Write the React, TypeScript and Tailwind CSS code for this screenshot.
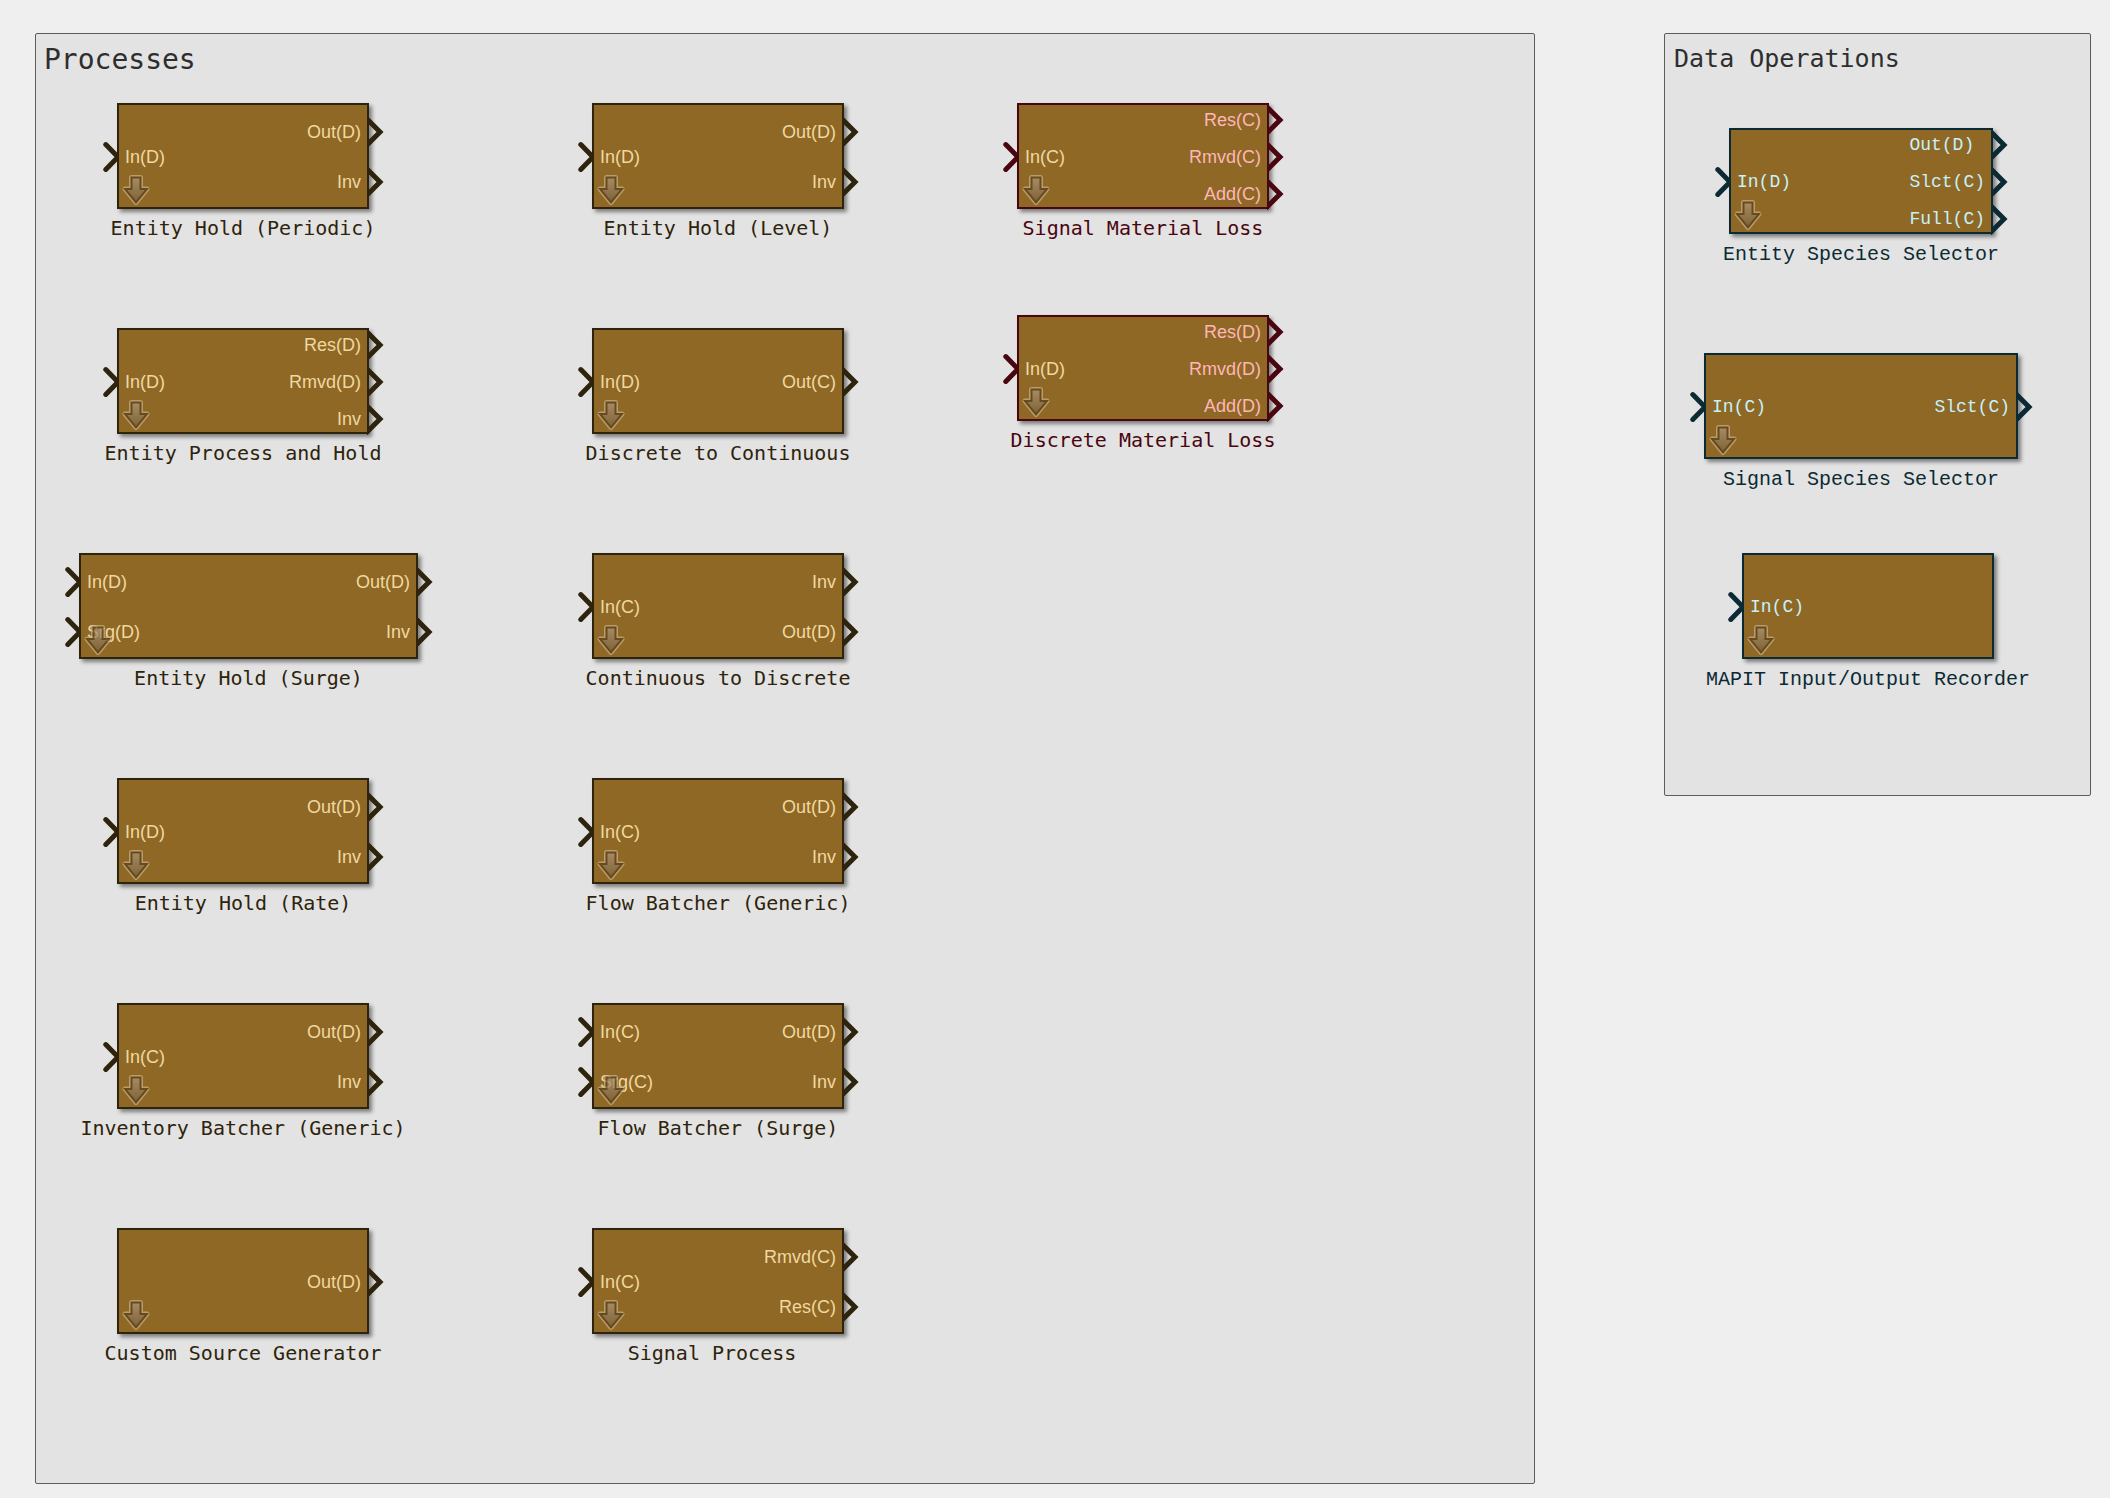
import React from "react";

type Tone = "olive" | "maroon" | "teal";

interface BlockSpec {
  name: string;
  ins: string[];
  outs: string[];
  place?: string;
  width?: string;
}

const TONES: Record<Tone, { border: string; label: string; stroke: string; inText: string; outText: string; port: string; caption: string }> = {
  olive: {
    border: "border-[#2e230c]",
    label: "text-[#2e230c]",
    stroke: "#2e230c",
    inText: "text-[#f0d8a2]",
    outText: "text-[#f0d8a2]",
    port: "font-['Liberation_Sans',Arial,sans-serif] text-[18px]",
    caption: "mt-[7px] font-['DejaVu_Sans_Mono',monospace] text-[20px]",
  },
  maroon: {
    border: "border-[#4a0610]",
    label: "text-[#4a0610]",
    stroke: "#4a0610",
    inText: "text-[#f0d8a2]",
    outText: "text-[#ffb6b9]",
    port: "font-['Liberation_Sans',Arial,sans-serif] text-[18px]",
    caption: "mt-[7px] font-['DejaVu_Sans_Mono',monospace] text-[20px]",
  },
  teal: {
    border: "border-[#0b2a33]",
    label: "text-[#0b2a33]",
    stroke: "#0b2a33",
    inText: "text-[#c6f1fa]",
    outText: "text-[#c6f1fa]",
    port: "font-['Liberation_Mono',monospace] text-[18px]",
    caption: "mt-[9px] font-['Liberation_Mono',monospace] text-[20px]",
  },
};

function InChevron({ color }: { color: string }) {
  return (
    <svg className="absolute top-1/2 right-full h-[32px] w-[17px] -translate-y-1/2" viewBox="0 0 17 32" fill="none" aria-hidden="true">
      <path d="M3.8 3.6 L16 16 L3.8 28.4" stroke={color} strokeWidth="5" strokeLinecap="round" />
    </svg>
  );
}

function OutChevron({ color }: { color: string }) {
  return (
    <svg className="absolute top-1/2 left-full h-[32px] w-[17px] -translate-y-1/2" viewBox="0 0 17 32" fill="none" aria-hidden="true">
      <path d="M-3 0 L13 16 L-3 32" stroke={color} strokeWidth="5" />
    </svg>
  );
}

function LookUnder() {
  const outline = "M9.5 2.5 H18.5 V14 H25 L14 27.5 L3 14 H9.5 Z";
  return (
    <svg className="absolute bottom-0 left-[3px] h-[32px] w-[28px] overflow-visible opacity-75" viewBox="0 0 28 32" fill="none" aria-hidden="true">
      <defs>
        <linearGradient id="arrowFill" x1="0" y1="0" x2="0" y2="1">
          <stop offset="0" stopColor="#b0977a" />
          <stop offset="1" stopColor="#78603c" />
        </linearGradient>
      </defs>
      <path d={outline} stroke="#c9ae84" strokeWidth="5" strokeLinejoin="round" />
      <path d={outline} fill="url(#arrowFill)" stroke="#5a421c" strokeWidth="2" />
    </svg>
  );
}

function Block({ spec, tone }: { spec: BlockSpec; tone: Tone }) {
  const t = TONES[tone];
  const outGap = spec.outs.length === 3 ? "gap-[13px]" : "gap-[26px]";
  return (
    <figure className={`flex flex-col ${spec.width ?? "w-[252px]"} ${spec.place ?? ""}`}>
      <div className={`relative flex h-[106px] items-stretch justify-between border-2 bg-[#8e6824] shadow-[3px_3px_4px_rgba(0,0,0,0.45)] ${t.border} ${t.port}`}>
        <ul className="flex flex-col justify-center gap-[26px] pt-[2px]">
          {spec.ins.map((p) => (
            <li key={p} className={`relative pl-[6px] leading-[24px] ${t.inText}`}>
              <InChevron color={t.stroke} />
              {p}
            </li>
          ))}
        </ul>
        <ul className={`flex flex-col justify-center pt-[2px] ${outGap} ${tone === "teal" ? "text-left" : "text-right"}`}>
          {spec.outs.map((p) => (
            <li key={p} className={`relative pr-[6px] leading-[24px] ${t.outText}`}>
              {p}
              <OutChevron color={t.stroke} />
            </li>
          ))}
        </ul>
        <LookUnder />
      </div>
      <figcaption className={`flex justify-center leading-[24px] whitespace-pre ${t.label} ${t.caption}`}>{spec.name}</figcaption>
    </figure>
  );
}

const COLUMN_ONE: BlockSpec[] = [
  { name: "Entity Hold (Periodic)", ins: ["In(D)"], outs: ["Out(D)", "Inv"], place: "ml-[38px]" },
  { name: "Entity Process and Hold", ins: ["In(D)"], outs: ["Res(D)", "Rmvd(D)", "Inv"], place: "ml-[38px]" },
  { name: "Entity Hold (Surge)", ins: ["In(D)", "Srg(D)"], outs: ["Out(D)", "Inv"], width: "w-[339px]" },
  { name: "Entity Hold (Rate)", ins: ["In(D)"], outs: ["Out(D)", "Inv"], place: "ml-[38px]" },
  { name: "Inventory Batcher (Generic)", ins: ["In(C)"], outs: ["Out(D)", "Inv"], place: "ml-[38px]" },
  { name: "Custom Source Generator", ins: [], outs: ["Out(D)"], place: "ml-[38px]" },
];

const COLUMN_TWO: BlockSpec[] = [
  { name: "Entity Hold (Level)", ins: ["In(D)"], outs: ["Out(D)", "Inv"] },
  { name: "Discrete to Continuous", ins: ["In(D)"], outs: ["Out(C)"] },
  { name: "Continuous to Discrete", ins: ["In(C)"], outs: ["Inv", "Out(D)"] },
  { name: "Flow Batcher (Generic)", ins: ["In(C)"], outs: ["Out(D)", "Inv"] },
  { name: "Flow Batcher (Surge)", ins: ["In(C)", "Srg(C)"], outs: ["Out(D)", "Inv"] },
  { name: "Signal Process ", ins: ["In(C)"], outs: ["Rmvd(C)", "Res(C)"] },
];

const COLUMN_THREE: BlockSpec[] = [
  { name: "Signal Material Loss", ins: ["In(C)"], outs: ["Res(C)", "Rmvd(C)", "Add(C)"] },
  { name: "Discrete Material Loss", ins: ["In(D)"], outs: ["Res(D)", "Rmvd(D)", "Add(D)"] },
];

const DATA_BLOCKS: BlockSpec[] = [
  { name: "Entity Species Selector", ins: ["In(D)"], outs: ["Out(D)", "Slct(C)", "Full(C)"], width: "w-[264px]", place: "ml-[25px]" },
  { name: "Signal Species Selector", ins: ["In(C)"], outs: ["Slct(C)"], width: "w-[314px]", place: "mt-[86px]" },
  { name: "MAPIT Input/Output Recorder", ins: ["In(C)"], outs: [], width: "w-[252px]", place: "ml-[38px] mt-[61px]" },
];

function Column({ blocks, tone, gap, className = "" }: { blocks: BlockSpec[]; tone: Tone; gap: string; className?: string }) {
  return (
    <div className={`flex shrink-0 flex-col ${gap} ${className}`}>
      {blocks.map((b) => (
        <Block key={b.name} spec={b} tone={tone} />
      ))}
    </div>
  );
}

export default function App() {
  return (
    <main className="flex min-h-screen items-start gap-[129px] bg-[#efefef] pt-[33px] pr-[19px] pb-[14px] pl-[35px]">
      <section className="grow rounded-[2px] border border-[#5c5c5c] bg-[#e3e3e3] pt-[10px] pb-[118px]">
        <h1 className="pl-[8px] font-['DejaVu_Sans_Mono',monospace] text-[28px] leading-[32px] text-[#2e2e2e]">Processes</h1>
        <div className="mt-[27px] flex items-start pl-[43px]">
          <Column blocks={COLUMN_ONE} tone="olive" gap="gap-[88px]" />
          <Column blocks={COLUMN_TWO} tone="olive" gap="gap-[88px]" className="ml-[174px]" />
          <Column blocks={COLUMN_THREE} tone="maroon" gap="gap-[75px]" className="ml-[173px]" />
        </div>
      </section>
      <section className="w-[427px] shrink-0 rounded-[2px] border border-[#5c5c5c] bg-[#e3e3e3] pt-[10px] pb-[103px]">
        <h1 className="pl-[9px] font-['DejaVu_Sans_Mono',monospace] text-[25px] leading-[30px] text-[#2e2e2e]">Data Operations</h1>
        <Column blocks={DATA_BLOCKS} tone="teal" gap="gap-0" className="mt-[54px] pl-[39px]" />
      </section>
    </main>
  );
}
